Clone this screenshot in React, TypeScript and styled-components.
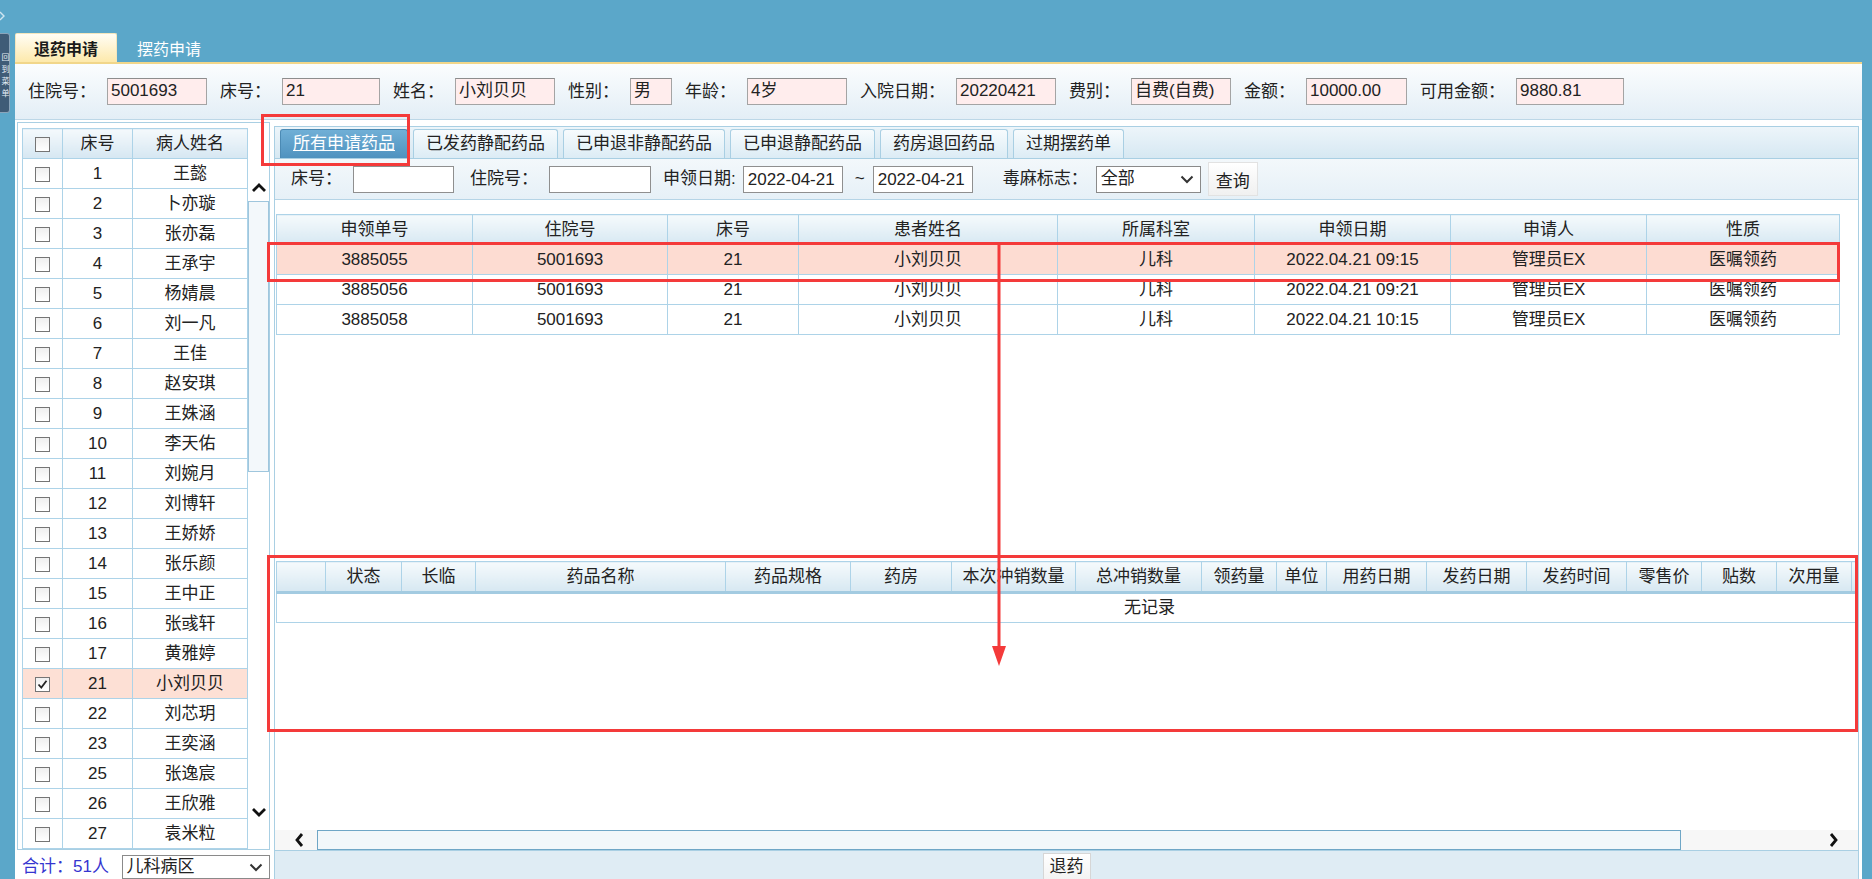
import React from 'react';
import styled, { createGlobalStyle } from 'styled-components';

const GlobalStyle = createGlobalStyle`
  html, body { margin: 0; padding: 0; overflow: hidden; }
  body {
    font-family: "Liberation Sans", "Noto Sans CJK SC", sans-serif;
    color: #222;
  }
  * { box-sizing: border-box; }
`;

const Page = styled.div`
  position: relative;
  width: 1872px;
  height: 879px;
  overflow: hidden;
  background: #5ba7c9;
  display: flex;
  flex-direction: column;
  font-size: 17px;
`;

const TopBar = styled.div`
  height: 32px;
  flex-shrink: 0;
  padding-top: 6px;
`;

const Body = styled.div`
  flex: 1;
  display: flex;
  min-height: 0;
`;

const SideRail = styled.div`
  width: 15px;
  flex-shrink: 0;
  padding-top: 1px;
`;

const CollapseHandle = styled.div`
  width: 10px;
  height: 80px;
  display: flex;
  justify-content: center;
  background: #3f5c77;
  border: 1px solid #8aa5bb;
  border-left: none;
  border-radius: 0 3px 3px 0;
  color: #e6eff6;
  font-size: 8px;
  line-height: 9px;
  writing-mode: vertical-rl;
  padding-top: 8px;
  letter-spacing: 4px;
`;

const Main = styled.div`
  flex: 1;
  min-width: 0;
  display: flex;
  flex-direction: column;
  margin-right: 10px;
`;

const TabStrip = styled.div`
  height: 30px;
  flex-shrink: 0;
  display: flex;
  align-items: flex-end;
`;

const TopTab = styled.div<{ $active?: boolean }>`
  height: 29px;
  display: flex;
  align-items: center;
  justify-content: center;
  padding: 0 ${p => (p.$active ? '18px' : '20px')};
  font-size: 16px;
  font-weight: ${p => (p.$active ? 'bold' : 'normal')};
  color: ${p => (p.$active ? '#1a1a1a' : '#fff')};
  background: ${p => (p.$active ? 'linear-gradient(#fffdf5, #fde9ab)' : 'transparent')};
  border: ${p => (p.$active ? '1px solid #f4e6bd' : 'none')};
  border-bottom: none;
  border-radius: 2px 2px 0 0;
`;

const Content = styled.div`
  flex: 1;
  min-height: 0;
  background: #fff;
  border-top: 2px solid #f1d68a;
  display: flex;
  flex-direction: column;
`;

const InfoRow = styled.div`
  height: 56px;
  flex-shrink: 0;
  display: flex;
  align-items: center;
  padding-left: 13px;
  background: linear-gradient(#fbfdfe, #e3eef6);
  border-bottom: 1px solid #bcd7e7;
`;

const InfoLabel = styled.span`
  margin-right: 11px;
  white-space: nowrap;
  line-height: 20px;
`;

const InfoField = styled.div<{ $w: number }>`
  width: ${p => p.$w}px;
  height: 27px;
  margin-right: 13px;
  background: #ffeded;
  border: 1px solid #a4a4a4;
  border-top-color: #8d8d8d;
  padding-left: 3px;
  line-height: 24px;
  white-space: nowrap;
  overflow: hidden;
`;

const Work = styled.div`
  flex: 1;
  min-height: 0;
  display: flex;
  gap: 4px;
  padding: 2px 3px 0 2px;
`;

const LeftPanel = styled.div`
  width: 253px;
  flex-shrink: 0;
  display: flex;
  flex-direction: column;
`;

const ListBox = styled.div`
  height: 728px;
  flex-shrink: 0;
  display: flex;
  border: 1px solid #a9cfe3;
  padding: 5px 1px 1px 4px;
  background: #fff;
  overflow: hidden;
`;

const ListTable = styled.table`
  width: 225px;
  table-layout: fixed;
  border-collapse: collapse;
  th, td {
    border: 1px solid #add3e8;
    text-align: center;
    padding: 0;
    height: 30px;
    font-weight: normal;
    line-height: 20px;
  }
  th { background: linear-gradient(#f4f9fc, #d6e7f2); }
`;

const ListRow = styled.tr<{ $selected?: boolean }>`
  background: ${p => (p.$selected ? '#fde0d5' : '#fff')};
`;

const CheckBox = styled.span`
  display: inline-flex;
  align-items: center;
  justify-content: center;
  width: 15px;
  height: 15px;
  border: 1px solid #757575;
  background: linear-gradient(#efefef, #fff);
  vertical-align: middle;
`;

const ScrollColumn = styled.div`
  width: 21px;
  display: flex;
  flex-direction: column;
  align-items: center;
  padding-top: 48px;
`;

const ArrowCell = styled.div`
  height: 24px;
  display: flex;
  align-items: center;
  justify-content: center;
`;

const ScrollThumb = styled.div`
  width: 21px;
  height: 271px;
  margin-top: 1px;
  border: 1px solid #9fc6dd;
  background: #f3f8fb;
`;

const ScrollGap = styled.div`
  flex: 1;
`;

const ListFooter = styled.div`
  height: 29px;
  display: flex;
  align-items: flex-start;
  padding: 5px 0 0 5px;
  color: #3535d0;
  white-space: nowrap;
`;

const FooterText = styled.span`
  line-height: 24px;
  width: 100px;
`;

const SelectBox = styled.div<{ $w: number; $h: number }>`
  width: ${p => p.$w}px;
  height: ${p => p.$h}px;
  display: flex;
  align-items: center;
  justify-content: space-between;
  padding: 0 6px 0 4px;
  background: #fff;
  border: 1px solid #8a8a8a;
  color: #222;
  line-height: 20px;
  white-space: nowrap;
`;

const RightPanel = styled.div`
  flex: 1;
  min-width: 0;
  margin-top: 4px;
  border: 1px solid #a9cfe3;
  border-bottom: none;
  display: flex;
  flex-direction: column;
  overflow: hidden;
`;

const InnerTabs = styled.div`
  height: 32px;
  flex-shrink: 0;
  display: flex;
  align-items: flex-end;
  gap: 5px;
  padding-left: 5px;
  background: linear-gradient(#edf5fa, #d6e8f2);
  border-bottom: 1px solid #a9cfe3;
`;

const InnerTab = styled.div<{ $active?: boolean }>`
  height: 29px;
  padding: 0 12px;
  display: flex;
  align-items: center;
  white-space: nowrap;
  line-height: 20px;
  color: ${p => (p.$active ? '#fff' : '#222')};
  text-decoration: ${p => (p.$active ? 'underline' : 'none')};
  background: ${p =>
    p.$active ? 'linear-gradient(#70afd6, #4f92bf)' : 'linear-gradient(#f7fbfd, #dcecf5)'};
  border: 1px solid ${p => (p.$active ? '#4b8ab4' : '#a9cfe3')};
  border-bottom: none;
  border-radius: 3px 3px 0 0;
`;

const FilterRow = styled.div`
  height: 41px;
  flex-shrink: 0;
  display: flex;
  align-items: center;
  padding-left: 16px;
  background: linear-gradient(#f3f8fb, #e6f0f7);
  border-bottom: 1px solid #b5d4e6;
  white-space: nowrap;
`;

const FilterLabel = styled.span<{ $gap: number }>`
  margin-right: ${p => p.$gap}px;
  line-height: 20px;
`;

const FilterField = styled.div<{ $w: number; $gap: number }>`
  width: ${p => p.$w}px;
  height: 27px;
  margin-right: ${p => p.$gap}px;
  background: #fff;
  border: 1px solid #8f8f8f;
  padding-left: 4px;
  line-height: 25px;
  overflow: hidden;
`;

const QueryButton = styled.div`
  height: 34px;
  margin-left: 7px;
  padding: 0 7px;
  display: flex;
  align-items: center;
  background: linear-gradient(#fff, #f0f0f0);
  border: 1px solid #e2e2e2;
`;

const GridArea = styled.div`
  height: 630px;
  flex-shrink: 0;
  background: #fff;
  display: flex;
  flex-direction: column;
`;

const UpperGrid = styled.div`
  height: 356px;
  flex-shrink: 0;
  padding: 14px 0 0 1px;
`;

const LowerGrid = styled.div`
  flex: 1;
  padding: 5px 0 0 1px;
  overflow: hidden;
`;

const DataTable = styled.table<{ $w: number }>`
  width: ${p => p.$w}px;
  table-layout: fixed;
  border-collapse: collapse;
  th, td {
    border: 1px solid #add3e8;
    text-align: center;
    padding: 0;
    height: 30px;
    font-weight: normal;
    line-height: 20px;
    white-space: nowrap;
    overflow: hidden;
  }
  th {
    background: linear-gradient(#f5fafc, #d7e8f2);
  }
`;

const LowerHeadRow = styled.tr`
  th {
    height: 31px;
    border-bottom: 3px solid #a3cbe1;
  }
`;

const DataRow = styled.tr<{ $selected?: boolean }>`
  background: ${p => (p.$selected ? '#fddcd2' : '#fff')};
`;

const EmptyCell = styled.td`
  height: 31px;
`;

const HScroll = styled.div`
  height: 20px;
  flex-shrink: 0;
  display: flex;
  align-items: center;
  background: #f7f7f7;
  padding-left: 18px;
`;

const HTrack = styled.div`
  width: 1364px;
  height: 20px;
  margin-left: 10px;
  border: 1px solid #6fa6c6;
  background: #f2f7fa;
`;

const HGap = styled.div`
  flex: 1;
`;

const HArrow = styled.div`
  width: 14px;
  display: flex;
  justify-content: center;
  margin-right: 18px;
`;

const ButtonBar = styled.div`
  height: 29px;
  flex-shrink: 0;
  display: flex;
  justify-content: center;
  align-items: flex-start;
  padding-top: 2px;
  background: #dfecf4;
  border-top: 1px solid #a9cfe3;
`;

const ActionButton = styled.div`
  height: 26px;
  padding: 0 6px;
  display: flex;
  align-items: center;
  line-height: 20px;
  background: linear-gradient(#fff, #f3f3f3);
  border: 1px solid #d6d6d6;
  border-bottom: none;
`;

const Mark = styled.div<{ $x: number; $y: number; $w: number; $h: number }>`
  position: absolute;
  left: ${p => p.$x}px;
  top: ${p => p.$y}px;
  width: ${p => p.$w}px;
  height: ${p => p.$h}px;
  border: 3px solid #f43a3a;
  pointer-events: none;
`;

const ArrowMark = styled.svg`
  position: absolute;
  left: 989px;
  top: 244px;
  pointer-events: none;
`;

const Chevron = ({ dir }: { dir: 'up' | 'down' | 'left' | 'right' }) => {
  const paths = {
    up: 'M2 10 L8 4 L14 10',
    down: 'M2 4 L8 10 L14 4',
    left: 'M9 2 L4 8 L9 14',
    right: 'M5 2 L10 8 L5 14',
  };
  const horiz = dir === 'left' || dir === 'right';
  return (
    <svg width={horiz ? 14 : 16} height={horiz ? 16 : 14} viewBox={horiz ? '0 0 14 16' : '0 0 16 14'}>
      <path d={paths[dir]} fill="none" stroke="#111" strokeWidth="2.8" strokeLinejoin="miter" />
    </svg>
  );
};

const SelectArrow = () => (
  <svg width="14" height="9" viewBox="0 0 14 9">
    <path d="M1.5 1.5 L7 7 L12.5 1.5" fill="none" stroke="#333" strokeWidth="2" />
  </svg>
);

const Tick = () => (
  <svg width="11" height="11" viewBox="0 0 11 11">
    <path d="M1.5 5.5 L4.3 8.5 L9.5 1.8" fill="none" stroke="#222" strokeWidth="1.8" />
  </svg>
);

const patients: [number, string][] = [
  [1, '王懿'], [2, '卜亦璇'], [3, '张亦磊'], [4, '王承宇'], [5, '杨婧晨'], [6, '刘一凡'],
  [7, '王佳'], [8, '赵安琪'], [9, '王姝涵'], [10, '李天佑'], [11, '刘婉月'], [12, '刘博轩'],
  [13, '王娇娇'], [14, '张乐颜'], [15, '王中正'], [16, '张彧轩'], [17, '黄雅婷'], [21, '小刘贝贝'],
  [22, '刘芯玥'], [23, '王奕涵'], [25, '张逸宸'], [26, '王欣雅'], [27, '袁米粒'],
];

const info: [string, string, number][] = [
  ['住院号：', '5001693', 100],
  ['床号：', '21', 98],
  ['姓名：', '小刘贝贝', 100],
  ['性别：', '男', 42],
  ['年龄：', '4岁', 100],
  ['入院日期：', '20220421', 100],
  ['费别：', '自费(自费)', 100],
  ['金额：', '10000.00', 101],
  ['可用金额：', '9880.81', 108],
];

const innerTabs = ['所有申请药品', '已发药静配药品', '已申退非静配药品', '已申退静配药品', '药房退回药品', '过期摆药单'];

const upperCols: [string, number][] = [
  ['申领单号', 196], ['住院号', 195], ['床号', 131], ['患者姓名', 259],
  ['所属科室', 197], ['申领日期', 196], ['申请人', 196], ['性质', 193],
];

const requests = [
  ['3885055', '5001693', '21', '小刘贝贝', '儿科', '2022.04.21 09:15', '管理员EX', '医嘱领药'],
  ['3885056', '5001693', '21', '小刘贝贝', '儿科', '2022.04.21 09:21', '管理员EX', '医嘱领药'],
  ['3885058', '5001693', '21', '小刘贝贝', '儿科', '2022.04.21 10:15', '管理员EX', '医嘱领药'],
];

const lowerCols: [string, number][] = [
  ['', 49], ['状态', 76], ['长临', 74], ['药品名称', 250], ['药品规格', 125], ['药房', 101],
  ['本次冲销数量', 124], ['总冲销数量', 126], ['领药量', 75], ['单位', 50], ['用药日期', 100],
  ['发药日期', 100], ['发药时间', 100], ['零售价', 75], ['贴数', 75], ['次用量', 75],
  ['', 85], ['', 86],
];

const sum = (cols: [string, number][]) => cols.reduce((a, c) => a + c[1], 0);

export default function App() {
  return (
    <>
      <GlobalStyle />
      <Page>
        <TopBar>
          <svg width="8" height="10" viewBox="0 0 8 10">
            <path d="M0 1 L4 5 L0 9" fill="none" stroke="#cfe5f1" strokeWidth="1.4" />
          </svg>
        </TopBar>
        <Body>
          <SideRail>
            <CollapseHandle>回到菜单</CollapseHandle>
          </SideRail>
          <Main>
            <TabStrip>
              <TopTab $active>退药申请</TopTab>
              <TopTab>摆药申请</TopTab>
            </TabStrip>
            <Content>
              <InfoRow>
                {info.map(([label, value, w]) => (
                  <React.Fragment key={label}>
                    <InfoLabel>{label}</InfoLabel>
                    <InfoField $w={w}>{value}</InfoField>
                  </React.Fragment>
                ))}
              </InfoRow>
              <Work>
                <LeftPanel>
                  <ListBox>
                    <ListTable>
                      <colgroup>
                        <col style={{ width: 40 }} />
                        <col style={{ width: 70 }} />
                        <col style={{ width: 115 }} />
                      </colgroup>
                      <thead>
                        <tr>
                          <th><CheckBox /></th>
                          <th>床号</th>
                          <th>病人姓名</th>
                        </tr>
                      </thead>
                      <tbody>
                        {patients.map(([bed, name]) => (
                          <ListRow key={bed} $selected={bed === 21}>
                            <td><CheckBox>{bed === 21 && <Tick />}</CheckBox></td>
                            <td>{bed}</td>
                            <td>{name}</td>
                          </ListRow>
                        ))}
                      </tbody>
                    </ListTable>
                    <ScrollColumn>
                      <ArrowCell><Chevron dir="up" /></ArrowCell>
                      <ScrollThumb />
                      <ScrollGap />
                      <ArrowCell><Chevron dir="down" /></ArrowCell>
                      <ArrowCell />
                    </ScrollColumn>
                  </ListBox>
                  <ListFooter>
                    <FooterText>合计：51人</FooterText>
                    <SelectBox $w={149} $h={24}>
                      儿科病区
                      <SelectArrow />
                    </SelectBox>
                  </ListFooter>
                </LeftPanel>

                <RightPanel>
                  <InnerTabs>
                    {innerTabs.map((t, i) => (
                      <InnerTab key={t} $active={i === 0}>{t}</InnerTab>
                    ))}
                  </InnerTabs>
                  <FilterRow>
                    <FilterLabel $gap={11}>床号：</FilterLabel>
                    <FilterField $w={101} $gap={16} />
                    <FilterLabel $gap={11}>住院号：</FilterLabel>
                    <FilterField $w={102} $gap={12} />
                    <FilterLabel $gap={7}>申领日期:</FilterLabel>
                    <FilterField $w={100} $gap={12}>2022-04-21</FilterField>
                    <FilterLabel $gap={8}>~</FilterLabel>
                    <FilterField $w={100} $gap={30}>2022-04-21</FilterField>
                    <FilterLabel $gap={8}>毒麻标志：</FilterLabel>
                    <SelectBox $w={105} $h={27}>
                      全部
                      <SelectArrow />
                    </SelectBox>
                    <QueryButton>查询</QueryButton>
                  </FilterRow>
                  <GridArea>
                    <UpperGrid>
                      <DataTable $w={sum(upperCols)}>
                        <colgroup>
                          {upperCols.map(([h, w]) => (
                            <col key={h} style={{ width: w }} />
                          ))}
                        </colgroup>
                        <thead>
                          <tr>
                            {upperCols.map(([h]) => (
                              <th key={h}>{h}</th>
                            ))}
                          </tr>
                        </thead>
                        <tbody>
                          {requests.map((r, i) => (
                            <DataRow key={r[0]} $selected={i === 0}>
                              {r.map((v, j) => (
                                <td key={j}>{v}</td>
                              ))}
                            </DataRow>
                          ))}
                        </tbody>
                      </DataTable>
                    </UpperGrid>
                    <LowerGrid>
                      <DataTable $w={sum(lowerCols)}>
                        <colgroup>
                          {lowerCols.map(([, w], i) => (
                            <col key={i} style={{ width: w }} />
                          ))}
                        </colgroup>
                        <thead>
                          <LowerHeadRow>
                            {lowerCols.map(([h], i) => (
                              <th key={i}>{h}</th>
                            ))}
                          </LowerHeadRow>
                        </thead>
                        <tbody>
                          <DataRow>
                            <EmptyCell colSpan={lowerCols.length}>无记录</EmptyCell>
                          </DataRow>
                        </tbody>
                      </DataTable>
                    </LowerGrid>
                  </GridArea>
                  <HScroll>
                    <Chevron dir="left" />
                    <HTrack />
                    <HGap />
                    <HArrow><Chevron dir="right" /></HArrow>
                  </HScroll>
                  <ButtonBar>
                    <ActionButton>退药</ActionButton>
                  </ButtonBar>
                </RightPanel>
              </Work>
            </Content>
          </Main>
        </Body>

        <Mark $x={261} $y={114} $w={149} $h={52} />
        <Mark $x={267} $y={242} $w={1573} $h={40} />
        <Mark $x={267} $y={555} $w={1591} $h={177} />
        <ArrowMark width="20" height="424" viewBox="0 0 20 424">
          <line x1="10" y1="0" x2="10" y2="406" stroke="#f43a3a" strokeWidth="3" />
          <polygon points="3,402 17,402 10,422" fill="#f43a3a" />
        </ArrowMark>
      </Page>
    </>
  );
}
